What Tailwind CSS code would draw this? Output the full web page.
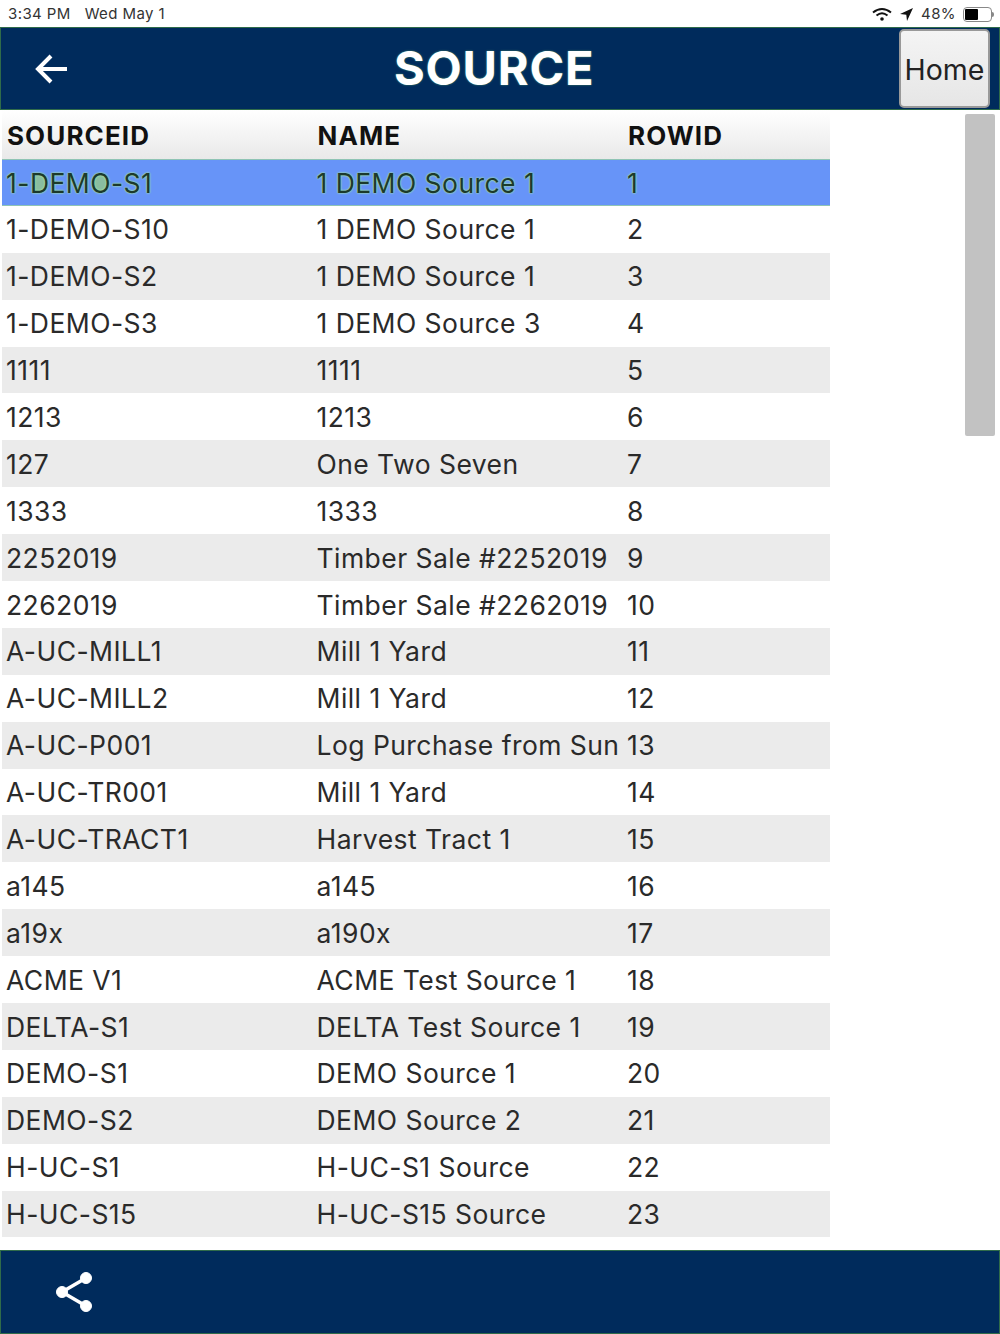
<!DOCTYPE html>
<html lang="en">
<head>
  <meta charset="UTF-8" />
  <title>Source</title>
  <script src="https://cdn.jsdelivr.net/npm/@tailwindcss/browser@4"></script>
</head>
<body class="bg-white font-['Inter',sans-serif] text-[#2a2a2a]">
  <div class="w-[1000px] h-[1334px] flex flex-col overflow-hidden">

    <!-- Status bar -->
    <div class="h-[27px] flex items-center justify-between pl-[8px] pr-[6px] text-[15px] tracking-[0.4px] text-[#333] pt-[1px]">
      <div class="flex gap-[14px]"><span>3:34 PM</span><span>Wed May 1</span></div>
      <div class="flex items-center gap-[7px]">
        <svg width="20" height="15" viewBox="0 0 20 15" fill="none" stroke="#111" stroke-width="2"><path d="M1 5.5q9-7 18 0M4.500 8.500q5.500-4.500 11 0"/><circle cx="10" cy="12" r="1.800" fill="#111" stroke="none"/></svg>
        <svg width="15" height="15" viewBox="0 0 15 15" fill="#111"><path d="M14 1 1 7l6.300.7.700 6.300z"/></svg>
        <span>48%</span>
        <div class="flex items-center">
          <div class="w-[29px] h-[15px] border border-[#888] rounded-[4px] p-[1px]"><div class="w-[13px] h-full bg-black rounded-[1px]"></div></div>
          <div class="w-[2px] h-[5px] bg-[#888] rounded-r-sm"></div>
        </div>
      </div>
    </div>

    <!-- Header -->
    <div class="h-[83px] bg-[#002b5c] border border-[#2f6b4a] flex items-center relative">
      <svg class="ml-[33px]" width="36" height="34" viewBox="0 0 36 34" fill="none" stroke="#fff" stroke-width="4"><path d="M33 17H4M17 4 4 17l13 13"/></svg>
      <div class="absolute left-[393px] top-[12px] text-[47px] leading-[56px] tracking-[0.8px] font-bold text-white [text-shadow:0_0_2px_#4c9a6a]">SOURCE</div>
      <button class="absolute right-[9px] top-[1px] w-[91px] h-[79px] pt-[3px] rounded-[5px] bg-gradient-to-b from-[#f4f4f4] to-[#e6e6e6] border-2 border-[#999] text-[28.500px] text-[#222]">Home</button>
    </div>

    <!-- Table + scrollbar -->
    <div class="flex-1 relative pl-[2px]">
      <div class="w-[828px]">
        <div class="h-[49px] grid grid-cols-[310.5px_310.5px_1fr] items-center bg-gradient-to-b from-white to-[#e9e9e9] font-bold text-[26px] tracking-[1.1px] text-[#111] pt-[1px]">
          <div class="pl-[5px]">SOURCEID</div><div class="pl-[5px]">NAME</div><div class="pl-[5px]">ROWID</div>
        </div>
        <div class="text-[26.500px] tracking-[0.45px]">
          <div class="h-[46.900px] grid grid-cols-[310.5px_310.5px_1fr] items-center pt-[2px] bg-[#6794f8] border-y border-[#8fc4b4] text-[#1c3a2c] [text-shadow:0_0_2px_#9fe0a8,0_0_2px_#9fe0a8]"><div class="pl-[4px]">1-<span class="bg-[radial-gradient(7px_9px_at_50%_52%,#8abda0_90%,transparent_100%)]">D</span>EM<span class="bg-[radial-gradient(7px_9px_at_50%_52%,#8abda0_90%,transparent_100%)]">O</span>-S1</div><div class="pl-[4px]">1 DEMO Source 1</div><div class="pl-[4px]">1</div></div>
          <div class="h-[46.900px] grid grid-cols-[310.5px_310.5px_1fr] items-center pt-[2px]"><div class="pl-[4px]">1-DEMO-S10</div><div class="pl-[4px]">1 DEMO Source 1</div><div class="pl-[4px]">2</div></div>
          <div class="h-[46.900px] grid grid-cols-[310.5px_310.5px_1fr] items-center pt-[2px] bg-[#ebebeb]"><div class="pl-[4px]">1-DEMO-S2</div><div class="pl-[4px]">1 DEMO Source 1</div><div class="pl-[4px]">3</div></div>
          <div class="h-[46.900px] grid grid-cols-[310.5px_310.5px_1fr] items-center pt-[2px]"><div class="pl-[4px]">1-DEMO-S3</div><div class="pl-[4px]">1 DEMO Source 3</div><div class="pl-[4px]">4</div></div>
          <div class="h-[46.900px] grid grid-cols-[310.5px_310.5px_1fr] items-center pt-[2px] bg-[#ebebeb]"><div class="pl-[4px]">1111</div><div class="pl-[4px]">1111</div><div class="pl-[4px]">5</div></div>
          <div class="h-[46.900px] grid grid-cols-[310.5px_310.5px_1fr] items-center pt-[2px]"><div class="pl-[4px]">1213</div><div class="pl-[4px]">1213</div><div class="pl-[4px]">6</div></div>
          <div class="h-[46.900px] grid grid-cols-[310.5px_310.5px_1fr] items-center pt-[2px] bg-[#ebebeb]"><div class="pl-[4px]">127</div><div class="pl-[4px]">One Two Seven</div><div class="pl-[4px]">7</div></div>
          <div class="h-[46.900px] grid grid-cols-[310.5px_310.5px_1fr] items-center pt-[2px]"><div class="pl-[4px]">1333</div><div class="pl-[4px]">1333</div><div class="pl-[4px]">8</div></div>
          <div class="h-[46.900px] grid grid-cols-[310.5px_310.5px_1fr] items-center pt-[2px] bg-[#ebebeb]"><div class="pl-[4px]">2252019</div><div class="pl-[4px]">Timber Sale #2252019</div><div class="pl-[4px]">9</div></div>
          <div class="h-[46.900px] grid grid-cols-[310.5px_310.5px_1fr] items-center pt-[2px]"><div class="pl-[4px]">2262019</div><div class="pl-[4px]">Timber Sale #2262019</div><div class="pl-[4px]">10</div></div>
          <div class="h-[46.900px] grid grid-cols-[310.5px_310.5px_1fr] items-center pt-[2px] bg-[#ebebeb]"><div class="pl-[4px]">A-UC-MILL1</div><div class="pl-[4px]">Mill 1 Yard</div><div class="pl-[4px]">11</div></div>
          <div class="h-[46.900px] grid grid-cols-[310.5px_310.5px_1fr] items-center pt-[2px]"><div class="pl-[4px]">A-UC-MILL2</div><div class="pl-[4px]">Mill 1 Yard</div><div class="pl-[4px]">12</div></div>
          <div class="h-[46.900px] grid grid-cols-[310.5px_310.5px_1fr] items-center pt-[2px] bg-[#ebebeb]"><div class="pl-[4px]">A-UC-P001</div><div class="pl-[4px]">Log Purchase from Sun</div><div class="pl-[4px]">13</div></div>
          <div class="h-[46.900px] grid grid-cols-[310.5px_310.5px_1fr] items-center pt-[2px]"><div class="pl-[4px]">A-UC-TR001</div><div class="pl-[4px]">Mill 1 Yard</div><div class="pl-[4px]">14</div></div>
          <div class="h-[46.900px] grid grid-cols-[310.5px_310.5px_1fr] items-center pt-[2px] bg-[#ebebeb]"><div class="pl-[4px]">A-UC-TRACT1</div><div class="pl-[4px]">Harvest Tract 1</div><div class="pl-[4px]">15</div></div>
          <div class="h-[46.900px] grid grid-cols-[310.5px_310.5px_1fr] items-center pt-[2px]"><div class="pl-[4px]">a145</div><div class="pl-[4px]">a145</div><div class="pl-[4px]">16</div></div>
          <div class="h-[46.900px] grid grid-cols-[310.5px_310.5px_1fr] items-center pt-[2px] bg-[#ebebeb]"><div class="pl-[4px]">a19x</div><div class="pl-[4px]">a190x</div><div class="pl-[4px]">17</div></div>
          <div class="h-[46.900px] grid grid-cols-[310.5px_310.5px_1fr] items-center pt-[2px]"><div class="pl-[4px]">ACME V1</div><div class="pl-[4px]">ACME Test Source 1</div><div class="pl-[4px]">18</div></div>
          <div class="h-[46.900px] grid grid-cols-[310.5px_310.5px_1fr] items-center pt-[2px] bg-[#ebebeb]"><div class="pl-[4px]">DELTA-S1</div><div class="pl-[4px]">DELTA Test Source 1</div><div class="pl-[4px]">19</div></div>
          <div class="h-[46.900px] grid grid-cols-[310.5px_310.5px_1fr] items-center pt-[2px]"><div class="pl-[4px]">DEMO-S1</div><div class="pl-[4px]">DEMO Source 1</div><div class="pl-[4px]">20</div></div>
          <div class="h-[46.900px] grid grid-cols-[310.5px_310.5px_1fr] items-center pt-[2px] bg-[#ebebeb]"><div class="pl-[4px]">DEMO-S2</div><div class="pl-[4px]">DEMO Source 2</div><div class="pl-[4px]">21</div></div>
          <div class="h-[46.900px] grid grid-cols-[310.5px_310.5px_1fr] items-center pt-[2px]"><div class="pl-[4px]">H-UC-S1</div><div class="pl-[4px]">H-UC-S1 Source</div><div class="pl-[4px]">22</div></div>
          <div class="h-[46.900px] grid grid-cols-[310.5px_310.5px_1fr] items-center pt-[2px] bg-[#ebebeb]"><div class="pl-[4px]">H-UC-S15</div><div class="pl-[4px]">H-UC-S15 Source</div><div class="pl-[4px]">23</div></div>
        </div>
      </div>
      <!-- scroll thumb -->
      <div class="absolute left-[965px] top-[4px] w-[30px] h-[322px] bg-[#c2c2c2] rounded-[2px]"></div>
    </div>

    <!-- Footer -->
    <div class="h-[84px] bg-[#002b5c] border border-[#2f6b4a] flex items-center">
      <svg class="ml-[53px]" width="40" height="42" viewBox="0 0 40 42" fill="#fff" stroke="#fff"><path d="M32 7 8 21l24 14" fill="none" stroke-width="3.500"/><circle cx="32" cy="7" r="5.500"/><circle cx="8" cy="21" r="5.500"/><circle cx="32" cy="35" r="5.500"/></svg>
    </div>
  </div>
</body>
</html>
